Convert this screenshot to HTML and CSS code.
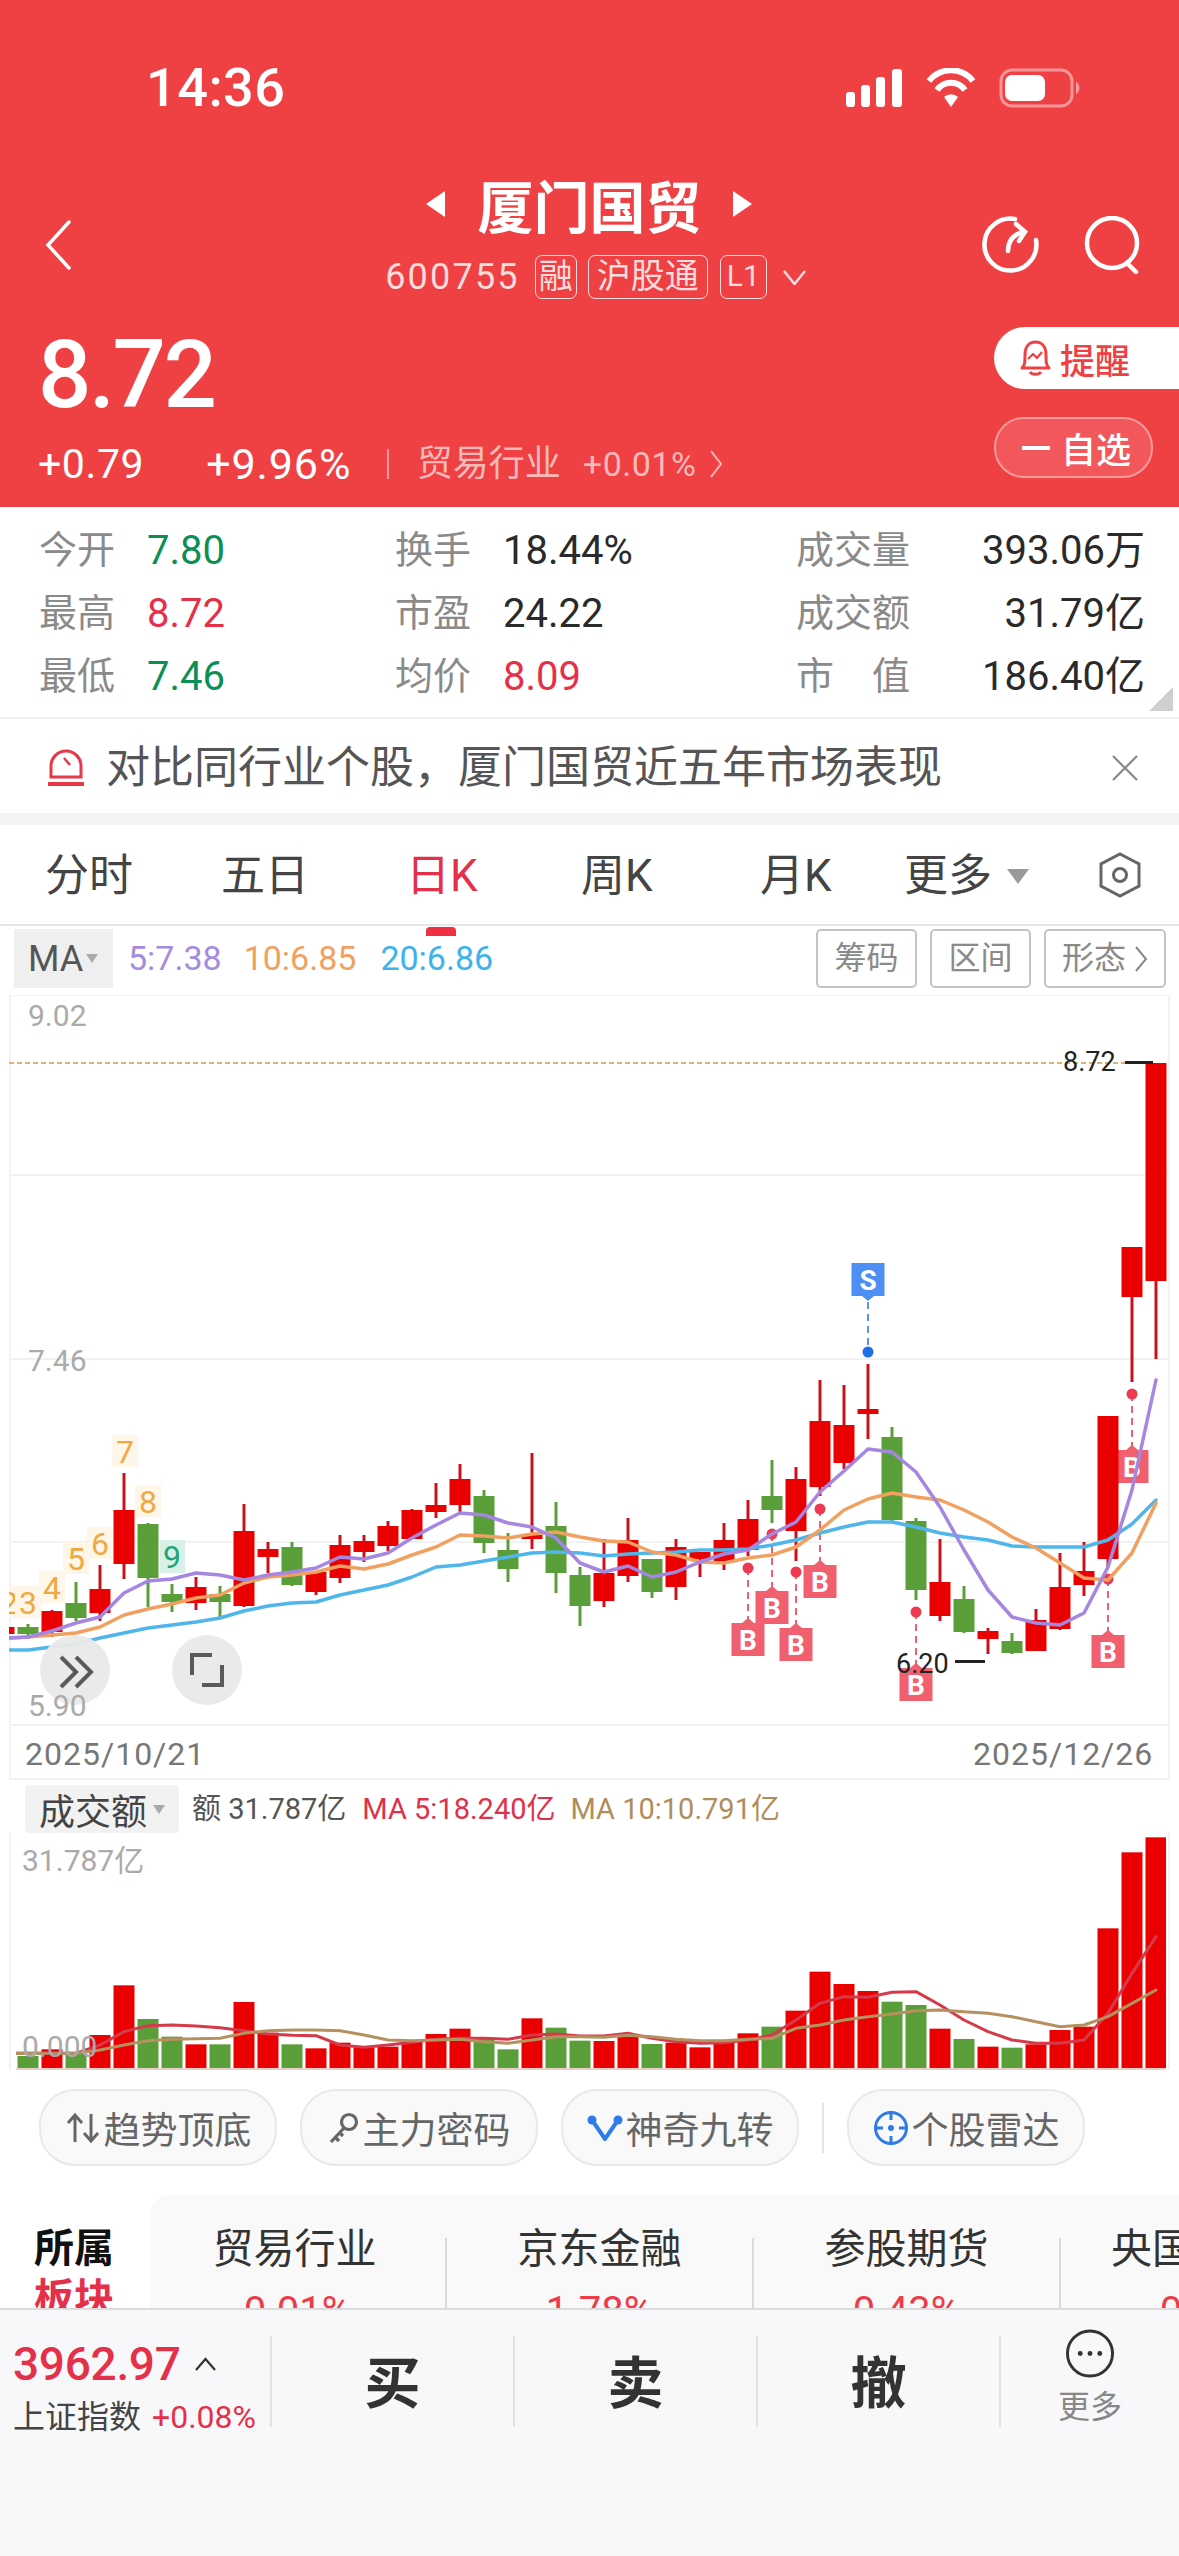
FILE: index.html
```html
<!DOCTYPE html>
<html lang="zh">
<head>
<meta charset="utf-8">
<title>厦门国贸</title>
<link rel="stylesheet" href="styles.css">
</head>
<body>
<div class="page">
  <header class="hero">
    <div class="status">
      <span class="clock">14:36</span>
      <svg class="status-icons" width="235" height="40" viewBox="0 0 235 40">
        <g fill="#fff">
          <rect x="0" y="24" width="9" height="15" rx="3"/>
          <rect x="15" y="17" width="9" height="22" rx="3"/>
          <rect x="30" y="9" width="9" height="30" rx="3"/>
          <rect x="46" y="1" width="10" height="38" rx="3"/>
        </g>
        <g fill="none" stroke="#fff" stroke-width="6">
          <path d="M83 13a28 28 0 0 1 44 0"/>
          <path d="M91 22a17 17 0 0 1 28 0"/>
        </g>
        <path d="M98 29a10 10 0 0 1 14 0L105 39z" fill="#fff"/>
        <rect x="155" y="2" width="71" height="36" rx="11" fill="none" stroke="#fff" stroke-opacity=".45" stroke-width="3"/>
        <rect x="159" y="7" width="40" height="26" rx="7" fill="#fff"/>
        <path d="M230 14a7 7 0 0 1 0 12z" fill="#fff" fill-opacity=".5"/>
      </svg>
    </div>
    <nav class="nav">
      <div class="nav-side">
        <svg class="back" width="26" height="50" viewBox="0 0 26 50"><path d="M24 2L3 25l21 23" fill="none" stroke="#fff" stroke-width="3.5" stroke-linecap="round"/></svg>
      </div>
      <div class="nav-center">
        <div class="title-row">
          <span class="tri-left"></span>
          <h1 class="title">厦门国贸</h1>
          <span class="tri-right"></span>
        </div>
        <div class="code-row">
          <span class="code">600755</span>
          <span class="badge">融</span>
          <span class="badge badge-wide">沪股通</span>
          <span class="badge badge-l1">L1</span>
          <svg class="code-caret" width="23" height="15" viewBox="0 0 23 15"><path d="M1 1l10.500 13L22 1" fill="none" stroke="#fcdcdc" stroke-width="2.500"/></svg>
        </div>
      </div>
      <div class="nav-side nav-right">
        <svg width="58" height="58" viewBox="0 0 58 58" fill="none" stroke="#fff" stroke-width="4.500" stroke-linecap="round">
          <path d="M34 3A26 26 0 1 0 55 24"/>
          <path d="M27 35c0-9 4-16 15-19"/>
          <path d="M35 8l9 8-6 9"/>
        </svg>
        <svg width="58" height="58" viewBox="0 0 58 58" fill="none" stroke="#fff" stroke-width="4.500" stroke-linecap="round">
          <circle cx="28" cy="27" r="25"/>
          <path d="M43 47l9 9"/>
        </svg>
      </div>
    </nav>
    <div class="quote">
      <div class="quote-main">
        <div class="price">8.72</div>
        <div class="quote-sub">
          <span class="chg">+0.79</span>
          <span class="chg chg-pct">+9.96%</span>
          <span class="vr"></span>
          <span class="ind">贸易行业</span>
          <span class="ind ind-pct">+0.01%</span>
          <svg class="ind-caret" width="14" height="30" viewBox="0 0 14 30"><path d="M2 2l10 13L2 28" fill="none" stroke="#f9b9b9" stroke-width="2"/></svg>
        </div>
      </div>
      <div class="quote-btns">
        <div class="btn-remind">
          <svg width="33" height="38" viewBox="0 0 33 38" fill="none" stroke="#ef4044" stroke-width="3" stroke-linejoin="round">
            <path d="M3 29c3-3 3-6 3-13C6 8 10 3 16.500 3S27 8 27 16c0 7 0 10 3 13z"/>
            <path d="M11 33c2 3 9 3 11 0"/>
            <path d="M9 20l5-5 4 4 5-6" stroke-width="2.200"/>
          </svg>
          <span>提醒</span>
        </div>
        <div class="btn-watch"><span class="minus"></span><span>自选</span></div>
      </div>
    </div>
  </header>

  <section class="stats">
    <div class="cell"><span class="lbl">今开</span><span class="val up">7.80</span></div>
    <div class="cell"><span class="lbl">换手</span><span class="val">18.44%</span></div>
    <div class="cell cell-r"><span class="lbl">成交量</span><span class="val">393.06万</span></div>
    <div class="cell"><span class="lbl">最高</span><span class="val dn">8.72</span></div>
    <div class="cell"><span class="lbl">市盈</span><span class="val">24.22</span></div>
    <div class="cell cell-r"><span class="lbl">成交额</span><span class="val">31.79亿</span></div>
    <div class="cell"><span class="lbl">最低</span><span class="val up">7.46</span></div>
    <div class="cell"><span class="lbl">均价</span><span class="val dn">8.09</span></div>
    <div class="cell cell-r"><span class="lbl">市　值</span><span class="val">186.40亿</span></div>
    <span class="corner"></span>
  </section>

  <section class="alert">
    <svg width="38" height="38" viewBox="0 0 38 38" fill="none" stroke="#e5394a" stroke-width="3">
      <path d="M4 28V17a15 15 0 0 1 30 0v11z"/>
      <path d="M17 9l6 7" stroke-width="2.500"/>
      <path d="M1 35h36" stroke-width="4"/>
    </svg>
    <span class="alert-text">对比同行业个股，厦门国贸近五年市场表现</span>
    <svg class="alert-x" width="28" height="26" viewBox="0 0 28 26"><path d="M2 1l24 24M26 1L2 25" stroke="#888" stroke-width="2.200"/></svg>
  </section>

  <nav class="tabs">
    <span class="tab t1">分时</span>
    <span class="tab t2">五日</span>
    <span class="tab t3 active">日K</span>
    <span class="tab t4">周K</span>
    <span class="tab t5">月K</span>
    <span class="tab t6">更多</span>
    <span class="tab-caret"></span>
    <svg class="tab-gear" width="44" height="46" viewBox="0 0 44 46" fill="none" stroke="#666" stroke-width="3">
      <path d="M22 2l19 10v22L22 44 3 34V12z"/>
      <circle cx="22" cy="23" r="6.500"/>
    </svg>
  </nav>

  <section class="ma-row">
    <div class="ma-pick"><span>MA</span><i class="mini-caret"></i></div>
    <span class="ma ma5">5:7.38</span>
    <span class="ma ma10">10:6.85</span>
    <span class="ma ma20">20:6.86</span>
    <div class="ma-btns">
      <span class="ma-btn">筹码</span>
      <span class="ma-btn">区间</span>
      <span class="ma-btn ma-btn-w">形态<svg width="14" height="30" viewBox="0 0 14 30"><path d="M2 3l10 12L2 27" fill="none" stroke="#888" stroke-width="2"/></svg></span>
    </div>
  </section>

  <svg id="priceChart" class="chart" width="1179" height="785" viewBox="0 995 1179 785"></svg>

  <section class="vol-legend">
    <div class="vol-pick"><span>成交额</span><i class="mini-caret"></i></div>
    <span class="vl vl-a">额 31.787亿</span>
    <span class="vl vl-b">MA 5:18.240亿</span>
    <span class="vl vl-c">MA 10:10.791亿</span>
  </section>

  <svg id="volChart" class="chart" width="1179" height="245" viewBox="0 1833 1179 245"></svg>

  <section class="chips">
    <div class="chip">
      <svg width="36" height="30" viewBox="0 0 36 30" fill="none" stroke="#666" stroke-width="3"><path d="M10 29V3M3 10l7-8 7 8M26 1v26M19 20l7 8 7-8"/></svg>
      <span>趋势顶底</span>
    </div>
    <div class="chip">
      <svg width="32" height="32" viewBox="0 0 32 32" fill="none" stroke="#666" stroke-width="3.200"><circle cx="21" cy="10" r="7.500"/><path d="M16 16L3 30M7 25l4 4M11 20l4 4"/></svg>
      <span>主力密码</span>
    </div>
    <div class="chip">
      <svg width="36" height="26" viewBox="0 0 36 26" fill="none" stroke="#2f7bea" stroke-width="4"><path d="M5 5l13 19L31 5"/><circle cx="5" cy="5" r="4.500" fill="#2f7bea" stroke="none"/><circle cx="31" cy="5" r="4.500" fill="#2f7bea" stroke="none"/></svg>
      <span>神奇九转</span>
    </div>
    <span class="chip-sep"></span>
    <div class="chip">
      <svg width="36" height="36" viewBox="0 0 36 36" fill="none" stroke="#2f7bea" stroke-width="3"><circle cx="18" cy="18" r="15.500"/><path d="M18 1v9M18 26v9M1 18h9M26 18h9"/><circle cx="18" cy="18" r="3" fill="#2f7bea" stroke="none"/></svg>
      <span>个股雷达</span>
    </div>
  </section>

  <section class="sector">
    <div class="sector-head"><span class="sh-a">所属</span><span class="sh-b">板块</span></div>
    <div class="sector-list">
      <div class="sector-item"><span class="sn">贸易行业</span><span class="sv">0.01%</span></div>
      <div class="sector-item"><span class="sn">京东金融</span><span class="sv">1.78%</span></div>
      <div class="sector-item"><span class="sn">参股期货</span><span class="sv">0.43%</span></div>
      <div class="sector-item"><span class="sn">央国企改革</span><span class="sv">0.35%</span></div>
    </div>
  </section>

  <footer class="bar">
    <div class="bar-index">
      <div class="bi-top"><span class="bi-val">3962.97</span><svg width="21" height="14" viewBox="0 0 21 14"><path d="M1 13L10.500 2 20 13" fill="none" stroke="#333" stroke-width="2.200"/></svg></div>
      <div class="bi-sub"><span class="bi-name">上证指数</span><span class="bi-pct">+0.08%</span></div>
    </div>
    <div class="bar-act">买</div>
    <div class="bar-act">卖</div>
    <div class="bar-act">撤</div>
    <div class="bar-more">
      <svg width="50" height="50" viewBox="0 0 50 50"><circle cx="25" cy="25" r="23" fill="none" stroke="#333" stroke-width="3"/><circle cx="15" cy="25" r="2.500" fill="#333"/><circle cx="25" cy="25" r="2.500" fill="#333"/><circle cx="35" cy="25" r="2.500" fill="#333"/></svg>
      <span>更多</span>
    </div>
  </footer>
</div>
<script src="chart.js"></script>
</body>
</html>
```
FILE: styles.css
```css
* { box-sizing: border-box; margin: 0; padding: 0; }
html, body { background: #fff; }
body {
  width: 1179px;
  height: 2556px;
  overflow: hidden;
  font-family: Roboto, "Noto Sans CJK SC", sans-serif;
  color: #222;
}
.page { width: 1179px; height: 2556px; overflow: hidden; position: relative; }

/* hero */
.hero { height: 507px; background: #ef4044; color: #fff; }
.status { height: 176px; display: flex; justify-content: space-between; align-items: center; padding: 0 98px 0 146px; }
.clock { font-size: 54px; font-weight: 500; line-height: 56px; letter-spacing: .5px; }
.nav { height: 124px; display: grid; grid-template-columns: 1fr auto 1fr; }
.nav-side { display: flex; align-items: center; margin-top: 12px; }
.back { margin-left: 45px; }
.nav-right { justify-content: flex-end; gap: 45px; padding-right: 37px; }
.title-row { height: 62px; margin-top: -3px; display: flex; align-items: center; justify-content: center; gap: 32px; }
.title { font-size: 56px; font-weight: 700; line-height: 62px; font-family: "Noto Sans CJK SC", sans-serif; }
.tri-left, .tri-right { width: 0; height: 0; border-top: 13px solid transparent; border-bottom: 13px solid transparent; }
.tri-left { border-right: 19px solid #fff; }
.tri-right { border-left: 19px solid #fff; }
.code-row { height: 50px; margin: 17px -6px 0 6px; display: flex; align-items: center; color: #fcdcdc; }
.code { font-size: 36px; letter-spacing: 2.200px; margin-right: 15px; }
.badge { height: 44px; line-height: 40px; font-size: 34px; padding: 0 3px; border: 1.500px solid #fcdcdc; border-radius: 7px; margin-right: 11px; }
.badge-wide { padding: 0 8px; margin-right: 12px; }
.badge-l1 { padding: 0 6px; font-size: 30px; margin-right: 16px; }
.quote { height: 207px; display: flex; justify-content: space-between; }
.quote-main { padding: 25px 0 0 38px; }
.price { font-size: 94px; font-weight: 500; line-height: 100px; letter-spacing: -2.500px; }
.quote-sub { height: 40px; margin-top: 19px; display: flex; align-items: center; }
.chg { font-size: 41px; line-height: 40px; letter-spacing: .6px; }
.chg-pct { margin-left: 62px; font-size: 43px; letter-spacing: .9px; }
.vr { width: 1.500px; height: 30px; background: #f79a9a; margin: 0 28px 0 36px; }
.ind { font-size: 36px; line-height: 40px; color: #f9b9b9; }
.ind-pct { font-size: 34px; margin-left: 22px; letter-spacing: .5px; }
.ind-caret { margin-left: 13px; }
.quote-btns { width: 185px; padding-top: 27px; display: flex; flex-direction: column; gap: 28px; }
.btn-remind { height: 62px; background: #fff; color: #ef4044; border-radius: 31px 0 0 31px; display: flex; align-items: center; padding-left: 25px; gap: 8px; font-size: 35px; font-weight: 500; }
.btn-watch { width: 159px; height: 61px; border: 2px solid #f79a9a; background: #f1575b; border-radius: 30px; display: flex; align-items: center; padding-left: 26px; gap: 11px; font-size: 35px; font-weight: 500; }
.minus { width: 28px; height: 4px; background: #fff; }

/* stats */
.stats { height: 212px; padding: 12px 0 0 39px; display: grid; grid-template-columns: 356px 401px 349px; grid-auto-rows: 63px; position: relative; border-bottom: 2px solid #f1f1f3; }
.cell { display: flex; align-items: center; gap: 32px; }
.cell-r { justify-content: space-between; gap: 0; }
.lbl { font-size: 38px; line-height: 63px; color: #8a8a8a; white-space: nowrap; }
.val { font-size: 40px; line-height: 63px; white-space: nowrap; color: #2a2a2a; }
.val.up { color: #0c8f54; }
.val.dn { color: #e5304a; }
.corner { position: absolute; right: 6px; bottom: 6px; width: 0; height: 0; border-left: 24px solid transparent; border-bottom: 24px solid #cfcfcf; }

/* alert */
.alert { height: 106px; display: flex; align-items: center; padding: 3px 40px 0 47px; border-bottom: 12px solid #f2f3f5; gap: 21px; }
.alert-text { font-size: 44px; line-height: 50px; color: #555; flex: 1; white-space: nowrap; }

/* tabs */
.tabs { height: 101px; display: flex; align-items: center; position: relative; border-bottom: 2px solid #e6e6e6; padding-bottom: 0; }
.tab { font-size: 44px; line-height: 60px; color: #444; white-space: nowrap; position: absolute; top: 21px; }
.t1 { left: 45px; } .t2 { left: 221px; } .t3 { left: 406px; } .t4 { left: 581px; } .t5 { left: 760px; } .t6 { left: 904px; }
.tab.active { color: #e5304a; }
.tab.active::after { content: ""; position: absolute; left: 20px; bottom: -30px; width: 30px; height: 9px; background: #ef2f42; border-radius: 4px 4px 0 0; }
.tab-caret { position: absolute; left: 1007px; top: 44px; width: 0; height: 0; border-left: 11px solid transparent; border-right: 11px solid transparent; border-top: 15px solid #999; }
.tab-gear { position: absolute; left: 1098px; top: 27px; }

/* ma row */
.ma-row { height: 69px; display: flex; align-items: flex-start; padding: 3px 13px 0 14px; }
.ma-pick { width: 99px; height: 59px; background: #efefef; display: flex; align-items: center; padding-left: 14px; font-size: 36px; color: #555; gap: 3px; }
.mini-caret { display: inline-block; width: 0; height: 0; border-left: 6px solid transparent; border-right: 6px solid transparent; border-top: 9px solid #aaa; }
.ma { font-size: 34px; line-height: 59px; white-space: nowrap; }
.ma5 { color: #a58ce0; margin-left: 15px; }
.ma10 { color: #f0a060; margin-left: 22px; }
.ma20 { color: #3db3ea; margin-left: 24px; }
.ma-btns { margin-left: auto; display: flex; gap: 13px; }
.ma-btn { width: 101px; height: 59px; border: 2px solid #c4c4c4; border-radius: 5px; font-size: 32px; line-height: 55px; color: #8a8a8a; text-align: center; white-space: nowrap; }
.ma-btn-w { width: 122px; display: flex; align-items: center; justify-content: center; gap: 8px; }

/* chart */
.chart { display: block; }
.axis { font-family: Roboto, sans-serif; font-size: 30px; fill: #aaa; }
.axis-date { font-family: Roboto, sans-serif; font-size: 32px; fill: #777; letter-spacing: 1px; }
.mark { font-family: Roboto, sans-serif; font-size: 27px; fill: #222; }
.seq { font-family: Roboto, sans-serif; font-size: 32px; fill: #f0a840; text-anchor: middle; }
.seq-g { fill: #1fa37a; }
.tag-text { font-family: Roboto, sans-serif; font-size: 28px; font-weight: 700; fill: #fff; text-anchor: middle; }
.vol-axis { font-family: Roboto, "Noto Sans CJK SC", sans-serif; font-size: 30px; fill: #aaa; }

.vol-legend { height: 53px; display: flex; align-items: flex-start; padding: 5px 0 0 25px; }
.vol-pick { width: 154px; height: 48px; background: #f2f2f2; border-radius: 4px; display: flex; align-items: center; padding-left: 14px; gap: 6px; font-size: 36px; color: #444; }
.vl { font-size: 29px; line-height: 48px; white-space: nowrap; }
.vl-a { margin-left: 13px; color: #555; }
.vl-b { margin-left: 16px; color: #e0314a; }
.vl-c { margin-left: 15px; color: #b08d5a; }

/* chips */
.chips { height: 77px; margin-top: 11px; padding-left: 39px; display: flex; align-items: center; gap: 23px; }
.chip { width: 238px; height: 77px; border: 2px solid #e8e8e8; background: #f9f9f9; border-radius: 36px; display: flex; align-items: center; justify-content: center; gap: 3px; font-size: 37px; color: #666; white-space: nowrap; }
.chip-sep { width: 2px; height: 50px; background: #e5e5e5; }

/* sector */
.sector { height: 142px; padding-top: 29px; display: flex; overflow: hidden; }
.sector-head { width: 150px; padding: 25px 0 0 34px; display: flex; flex-direction: column; font-family: "Noto Sans CJK SC", sans-serif; font-size: 40px; font-weight: 700; line-height: 50px; }
.sh-a { color: #111; }
.sh-b { color: #e5304a; }
.sector-list { flex: 1; background: #f9f9f9; border-radius: 22px 0 0 0; display: flex; padding-top: 30px; overflow: hidden; }
.sector-item { flex: none; width: 307px; height: 90px; border-right: 2px solid #d9d9d9; display: flex; flex-direction: column; align-items: center; margin-top: 13px; }
.sector-item:first-child { width: 297px; }
.sn { font-size: 41px; line-height: 50px; color: #333; margin-top: -14px; white-space: nowrap; }
.sv { font-size: 40px; line-height: 50px; color: #ef3a4a; margin-top: 13px; }
.sector-item:first-child .sn { margin-left: -6px; }

/* bottom bar */
.bar { height: 248px; background: #f8f8fa; border-top: 2px solid #dcdcdc; display: flex; align-items: flex-start; padding-top: 26px; position: relative; }
.bar-index { width: 270px; height: 91px; padding-left: 13px; }
.bi-top { display: flex; align-items: center; height: 36px; margin-top: 10px; gap: 14px; }
.bi-val { font-size: 46px; font-weight: 500; color: #e5304a; line-height: 44px; letter-spacing: -.3px; }
.bi-sub { display: flex; align-items: center; margin-top: 17px; gap: 11px; }
.bi-name { font-size: 32px; line-height: 36px; color: #444; }
.bi-pct { font-size: 32px; line-height: 36px; color: #e5304a; }
.bar-act { width: 243px; height: 91px; padding-bottom: 6px; border-left: 2px solid #e2e2e2; display: flex; align-items: center; justify-content: center; font-family: "Noto Sans CJK SC", sans-serif; font-size: 56px; font-weight: 700; color: #333; }
.bar-more { flex: 1; height: 91px; border-left: 2px solid #e2e2e2; display: flex; flex-direction: column; align-items: center; font-size: 32px; color: #888; }
.bar-more svg { margin-top: -7px; }
.bar-more span { line-height: 40px; margin-top: 9px; }
```
FILE: chart.js
```js
(function () {
  var NS = 'http://www.w3.org/2000/svg';
  function el(parent, tag, attrs, text) {
    var e = document.createElementNS(NS, tag);
    for (var k in attrs) e.setAttribute(k, attrs[k]);
    if (text !== undefined) e.textContent = text;
    parent.appendChild(e);
    return e;
  }
  var X = function (n) { return 4 + 24 * n; };
  var RED = '#ea0000', GREEN = '#5a9e3a', WICK = '#c9121c';

  // r/g, bodyTop, bodyBottom, wickTop, wickBottom
  var candles = [
    ['r',1627,1634,1627,1634],['g',1627,1634,1624,1636],['r',1611,1632,1610,1637],['g',1603,1618,1582,1621],
    ['r',1589,1613,1565,1621],['r',1510,1564,1473,1579],['g',1524,1578,1523,1607],['g',1594,1602,1584,1612],
    ['r',1587,1603,1577,1610],['g',1594,1602,1586,1617],['r',1531,1606,1504,1607],['r',1549,1557,1542,1573],
    ['g',1547,1585,1542,1586],['r',1572,1592,1572,1595],['r',1545,1578,1535,1583],['r',1541,1552,1535,1562],
    ['r',1526,1546,1521,1551],['r',1510,1539,1509,1539],['r',1505,1512,1483,1518],['r',1479,1505,1464,1513],
    ['g',1496,1543,1490,1553],['g',1550,1569,1533,1582],['r',1535,1539,1453,1549],['g',1526,1573,1502,1593],
    ['g',1575,1606,1567,1626],['r',1573,1601,1539,1607],['r',1540,1576,1518,1582],['g',1559,1592,1559,1598],
    ['r',1547,1587,1539,1600],['r',1552,1559,1552,1577],['r',1540,1561,1523,1570],['r',1519,1550,1500,1556],
    ['g',1496,1510,1460,1523],['r',1479,1531,1467,1561],['r',1421,1487,1380,1496],['r',1425,1463,1385,1469],
    ['r',1409,1414,1364,1439],['g',1437,1520,1427,1522],['g',1521,1590,1518,1600],['r',1582,1616,1539,1621],
    ['g',1599,1632,1586,1633],['r',1631,1639,1628,1654],['g',1641,1653,1633,1654],['r',1620,1651,1609,1651],
    ['r',1587,1629,1553,1630],['r',1571,1585,1542,1596],['r',1416,1559,1416,1567],['r',1247,1297,1247,1382],
    ['r',1063,1281,1063,1359]
  ];
  var purple = [1638,1637,1631,1623,1617,1593,1581,1579,1573,1575,1580,1575,1572,1568,1557,1559,1553,1538,1525,1513,1515,1523,1527,1538,1563,1572,1566,1577,1572,1562,1554,1550,1534,1522,1492,1471,1449,1452,1472,1507,1550,1590,1617,1623,1625,1613,1567,1490,1380];
  var orange = [1639,1637,1635,1633,1627,1615,1609,1604,1598,1595,1583,1577,1575,1572,1566,1569,1564,1555,1547,1535,1536,1538,1534,1532,1537,1541,1542,1552,1555,1562,1563,1558,1555,1547,1530,1510,1499,1493,1497,1500,1510,1522,1537,1548,1563,1578,1580,1553,1503];
  var blue = [1650,1650,1647,1644,1638,1633,1628,1625,1622,1618,1611,1606,1603,1602,1595,1590,1585,1577,1567,1565,1561,1557,1553,1552,1553,1556,1554,1553,1552,1550,1550,1549,1545,1540,1533,1527,1522,1522,1527,1533,1537,1540,1546,1547,1547,1547,1540,1524,1500];

  var svg = document.getElementById('priceChart');
  var defs = el(svg, 'defs', {});
  var cp = el(defs, 'clipPath', { id: 'plot' });
  el(cp, 'rect', { x: 9, y: 995, width: 1159, height: 785 });
  var cv = el(defs, 'clipPath', { id: 'volPlot' });

  function hline(p, y, c) { el(p, 'rect', { x: 9, y: y - 1, width: 1159, height: 2, fill: c || '#f2f2f2' }); }
  function vline(p, x, y1, y2) { el(p, 'rect', { x: x, y: y1, width: 2, height: y2 - y1, fill: '#f2f2f2' }); }

  vline(svg, 9, 995, 1780);
  vline(svg, 1168, 995, 1780);
  hline(svg, 995); hline(svg, 1175); hline(svg, 1359); hline(svg, 1542); hline(svg, 1725); hline(svg, 1779);
  el(svg, 'line', { x1: 9, y1: 1063, x2: 1153, y2: 1063, stroke: '#dcb36c', 'stroke-width': 2, 'stroke-dasharray': '5 3' });

  el(svg, 'text', { class: 'axis', x: 28, y: 1026 }, '9.02');
  el(svg, 'text', { class: 'axis', x: 28, y: 1371 }, '7.46');
  el(svg, 'text', { class: 'axis-date', x: 25, y: 1765 }, '2025/10/21');
  el(svg, 'text', { class: 'axis-date', x: 973, y: 1765 }, '2025/12/26');

  var plot = el(svg, 'g', { 'clip-path': 'url(#plot)' });

  // sequence numbers
  [[9,1602,'2'],[28,1602,'3'],[52,1587,'4'],[76,1558,'5'],[100,1543,'6'],[125,1451,'7'],[148,1501,'8']].forEach(function (s) {
    el(plot, 'rect', { x: s[0] - 13, y: s[1] - 16, width: 26, height: 32, fill: '#fff6ea' });
    el(plot, 'text', { class: 'seq', x: s[0], y: s[1] + 12 }, s[2]);
  });
  el(plot, 'rect', { x: 160, y: 1540, width: 25, height: 33, fill: '#d8f0e6' });
  el(plot, 'text', { class: 'seq seq-g', x: 172, y: 1568 }, '9');

  // buy / sell markers: n, dotY, tagTop
  var buys = [[31,1568,1623],[32,1534,1591],[33,1572,1628],[34,1509,1565],[38,1612,1668],[46,1579,1635],[47,1394,1450]];
  function tag(x, top, color, label, up) {
    var L = x - 16.5, R = x + 16.5, b = top + 33;
    var d = up
      ? 'M' + L + ' ' + top + 'H' + (x - 6) + 'L' + x + ' ' + (top - 5) + 'L' + (x + 6) + ' ' + top + 'H' + R + 'V' + b + 'H' + L + 'Z'
      : 'M' + L + ' ' + top + 'H' + R + 'V' + b + 'H' + (x + 6) + 'L' + x + ' ' + (b + 5) + 'L' + (x - 6) + ' ' + b + 'H' + L + 'Z';
    el(plot, 'path', { d: d, fill: color });
    el(plot, 'text', { class: 'tag-text', x: x, y: top + 27 }, label);
  }
  buys.forEach(function (b) { tag(X(b[0]), b[2], '#f0606e', 'B', true); });
  tag(X(36), 1263, '#4d8ff5', 'S', false);

  candles.forEach(function (c, n) {
    var x = X(n), col = c[0] === 'r' ? RED : GREEN;
    el(plot, 'rect', { x: x - 1.5, y: c[3], width: 3, height: c[4] - c[3], fill: c[0] === 'r' ? WICK : GREEN });
    el(plot, 'rect', { x: x - 10.5, y: c[1], width: 21, height: c[2] - c[1], fill: col });
  });

  buys.forEach(function (b) {
    var x = X(b[0]);
    el(plot, 'line', { x1: x, y1: b[1], x2: x, y2: b[2] - 4, stroke: '#ef5f6f', 'stroke-width': 2, 'stroke-dasharray': '7 5' });
    el(plot, 'circle', { cx: x, cy: b[1], r: 5.5, fill: '#ee3a50' });
  });
  el(plot, 'line', { x1: X(36), y1: 1302, x2: X(36), y2: 1352, stroke: '#5b93ee', 'stroke-width': 2, 'stroke-dasharray': '7 5' });
  el(plot, 'circle', { cx: X(36), cy: 1352, r: 5.5, fill: '#1e6fe8' });

  function line(p, arr, color, w, toY) {
    var pts = arr.map(function (y, i) { return X(i) + ',' + (toY ? toY(y) : y); }).join(' ');
    el(p, 'polyline', { points: pts, fill: 'none', stroke: color, 'stroke-width': w, 'stroke-linejoin': 'round', 'stroke-linecap': 'round' });
  }
  line(plot, blue, '#4fb6ec', 3.5);
  line(plot, orange, '#f0a060', 3.5);
  line(plot, purple, '#a586e0', 3.5);

  // floating round buttons
  el(plot, 'circle', { cx: 75, cy: 1670, r: 35, fill: '#e9e9e9', 'fill-opacity': '.95' });
  el(plot, 'circle', { cx: 207, cy: 1670, r: 35, fill: '#e9e9e9', 'fill-opacity': '.95' });
  el(plot, 'path', { d: 'M61 1657l15 15-15 15M76 1657l15 15-15 15', fill: 'none', stroke: '#5a5a5a', 'stroke-width': 4 });
  el(plot, 'path', { d: 'M192 1675v-20h20M222 1665v20h-20', fill: 'none', stroke: '#5a5a5a', 'stroke-width': 4 });
  el(svg, 'text', { class: 'axis', x: 28, y: 1716 }, '5.90');

  // extreme labels
  el(svg, 'text', { class: 'mark', x: 1063, y: 1071 }, '8.72');
  el(svg, 'rect', { x: 1125, y: 1061, width: 28, height: 3, fill: '#222' });
  el(svg, 'text', { class: 'mark', x: 896, y: 1673 }, '6.20');
  el(svg, 'rect', { x: 955, y: 1660, width: 30, height: 3, fill: '#222' });

  // volume
  var vs = document.getElementById('volChart');
  var Y = function (z) { return 1760 + z / 3; };
  var base = 2068;
  var tops = [878,888,868,878,825,676,777,830,853,853,726,818,853,865,848,860,860,842,822,806,833,868,775,803,842,843,830,852,848,862,843,820,800,752,635,672,693,725,735,806,837,860,863,853,810,800,505,277,232];
  var volTypes = ['r','g','r','g','r','r','g','g','r','g','r','r','g','r','r','r','r','r','r','r','g','g','r','g','g','r','r','g','r','r','r','r','g','r','r','r','r','g','g','r','g','r','g','r','r','r','r','r','r'];
  el(cv, 'rect', { x: 16, y: 1833, width: 1150, height: 245 });
  var vg = el(vs, 'g', { 'clip-path': 'url(#volPlot)' });
  vline(vs, 9, 1833, 2070);
  vline(vs, 1168, 1833, 2070);
  tops.forEach(function (t, n) {
    var y = Y(t);
    el(vg, 'rect', { x: X(n) - 10.5, y: y, width: 21, height: base - y, fill: volTypes[n] === 'r' ? RED : GREEN });
  });
  el(vs, 'rect', { x: 16, y: base, width: 1150, height: 2, fill: '#e9d0c8' });
  var ma5 = [880,880,880,880,855,815,797,795,798,803,812,822,826,827,855,862,855,847,838,835,835,838,825,822,828,828,820,835,845,850,848,840,825,780,730,710,712,697,695,735,780,815,840,850,850,840,760,640,530];
  var ma10 = [880,880,880,880,870,855,842,838,836,835,820,812,810,810,812,825,840,842,840,838,845,850,840,830,830,832,826,830,838,842,842,838,835,805,795,780,770,762,752,750,755,760,770,785,800,795,770,730,690];
  line(vg, ma5, '#d43a4a', 3, Y);
  line(vg, ma10, '#b4915e', 3, Y);
  el(vs, 'text', { class: 'vol-axis', x: 22, y: 1871 }, '31.787亿');
  el(vs, 'text', { class: 'vol-axis', x: 22, y: 2057 }, '0.000');
})();
```
